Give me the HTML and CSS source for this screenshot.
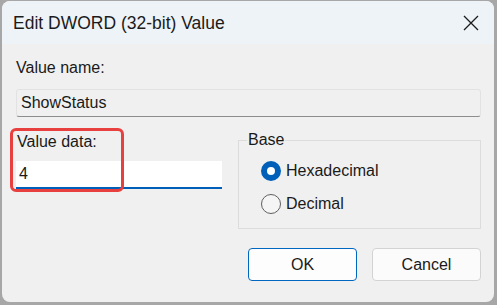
FILE: index.html
```html
<!DOCTYPE html>
<html lang="en">
<head>
    <meta charset="UTF-8">
    <meta name="viewport" content="width=device-width, initial-scale=1.0">
    <title>Edit DWORD (32-bit) Value</title>
    <link rel="stylesheet" href="styles.css">
</head>
<body>
    <div class="dialog">
        <div class="titlebar">
            <span class="title">Edit DWORD (32-bit) Value</span>
            <svg class="close" width="16" height="16" viewBox="0 0 16 16">
                <path d="M1 1 L15 15 M15 1 L1 15" stroke="#1b1b1b" stroke-width="1.3" fill="none"/>
            </svg>
        </div>
        <div class="content">
            <div class="label">Value name:</div>
            <div class="name-box">ShowStatus</div>
            <div class="row">
                <div class="data-col">
                    <div class="label">Value data:</div>
                    <div class="data-box">4</div>
                </div>
                <fieldset class="base">
                    <legend>Base</legend>
                    <div class="radio">
                        <span class="dot checked"></span>
                        <span>Hexadecimal</span>
                    </div>
                    <div class="radio">
                        <span class="dot"></span>
                        <span>Decimal</span>
                    </div>
                </fieldset>
            </div>
            <div class="buttons">
                <button class="btn btn-ok">OK</button>
                <button class="btn">Cancel</button>
            </div>
        </div>
        <!-- red marker round the value data field -->
        <div class="highlight"></div>
    </div>
</body>
</html>
```

FILE: styles.css
```css
body {
    margin: 0;
    width: 497px;
    height: 305px;
    background: #a7a7a7;
    font-family: "Liberation Sans", Arial, sans-serif;
    font-size: 16px;
    color: #1a1a1a;
    overflow: hidden;
}
.dialog {
    position: relative;
    margin: 1px 0 0 2px;
    width: 492px;
    height: 301px;
    background: #f0f0f0;
    border-radius: 8px;
    overflow: hidden;
}
.titlebar {
    display: flex;
    align-items: center;
    justify-content: space-between;
    height: 43px;
    padding: 0 15px 0 11px;
    background: #eef3f8;
}
.title {
    font-size: 17.5px;
    color: #1b1b1b;
    padding-top: 1px;
}
.close {
    margin-top: 1px;
}
.content {
    padding: 14px 13px 0 14px;
}
.label {
    line-height: 20px;
    height: 20px;
}
.name-box {
    margin-top: 11px;
    height: 26px;
    line-height: 26px;
    padding-left: 4px;
    border: 1px solid #e2e2e2;
    border-bottom-color: #8d8d8d;
    border-radius: 3px;
    background: #f0f0f0;
}
.row {
    display: flex;
    justify-content: space-between;
    margin-top: 15px;
}
.data-col {
    width: 206px;
}
.data-col .label {
    padding-left: 1px;
}
.data-box {
    margin-top: 9px;
    height: 26px;
    line-height: 26px;
    padding-left: 3px;
    background: #fff;
    border-bottom: 2px solid #005fb8;
}
.base {
    box-sizing: border-box;
    width: 243px;
    height: 99px;
    margin: -2px 0 0;
    padding: 4px 8px 0 22px;
    border: 1px solid #dcdcdc;
}
.base legend {
    padding: 0 1px;
    margin-left: -14px;
    line-height: 20px;
}
.radio {
    display: flex;
    align-items: center;
    gap: 5px;
    height: 33px;
}
.dot {
    box-sizing: border-box;
    width: 20px;
    height: 20px;
    border-radius: 50%;
    border: 1px solid #5f5f5f;
    background: #f5f5f5;
}
.dot.checked {
    border: 6px solid #005fb8;
    background: #fff;
}
.buttons {
    display: flex;
    justify-content: flex-end;
    gap: 15px;
    margin-top: 19px;
}
.btn {
    box-sizing: border-box;
    width: 109px;
    height: 33px;
    border: 1px solid #d3d3d3;
    border-radius: 4px;
    background: #fbfbfb;
    font-family: "Liberation Sans", Arial, sans-serif;
    font-size: 16px;
    color: #1a1a1a;
}
.btn-ok {
    border-color: #0067c0;
    background: #fdfdfd;
}
.highlight {
    position: absolute;
    left: 8px;
    top: 127px;
    width: 108px;
    height: 58px;
    border: 3px solid #e8403f;
    border-radius: 6px;
}
```
